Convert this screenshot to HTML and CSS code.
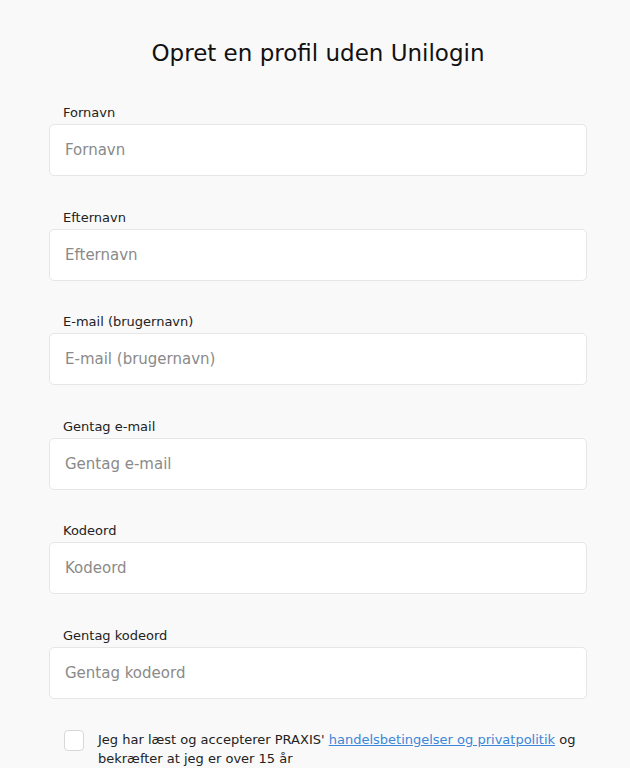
FILE: index.html
```html
<!DOCTYPE html>
<html lang="da">
  <head>
    <meta charset="UTF-8" />
    <meta name="viewport" content="width=device-width, initial-scale=1.0" />
    <title>Opret en profil uden Unilogin</title>
    <link rel="stylesheet" href="styles.css">
  </head>
  <body>
    <div class="signup">
      <h1 class="signup-title">Opret en profil uden Unilogin</h1>
      <form class="signup-form">
        <div class="field">
          <label for="firstname">Fornavn</label>
          <input id="firstname" type="text" placeholder="Fornavn" />
        </div>
        <div class="field">
          <label for="lastname">Efternavn</label>
          <input id="lastname" type="text" placeholder="Efternavn" />
        </div>
        <div class="field">
          <label for="email">E-mail (brugernavn)</label>
          <input id="email" type="email" placeholder="E-mail (brugernavn)" />
        </div>
        <div class="field">
          <label for="email2">Gentag e-mail</label>
          <input id="email2" type="email" placeholder="Gentag e-mail" />
        </div>
        <div class="field">
          <label for="password">Kodeord</label>
          <input id="password" type="password" placeholder="Kodeord" />
        </div>
        <div class="field">
          <label for="password2">Gentag kodeord</label>
          <input id="password2" type="password" placeholder="Gentag kodeord" />
        </div>
        <label class="terms">
          <input type="checkbox" />
          <span class="terms-box"></span>
          <span class="terms-text">Jeg har læst og accepterer PRAXIS' <a href="#">handelsbetingelser og privatpolitik</a> og bekræfter at jeg er over 15 år</span>
        </label>
      </form>
    </div>
  </body>
</html>
```

FILE: styles.css
```css
body {
  margin: 0;
  padding: 0;
  background: #f9f9f9;
  font-family: "DejaVu Sans", sans-serif;
  color: #222;
}
.signup {
  width: 538px;
  margin: 0 auto 0 49px;
  padding-top: 39px;
}
.signup-title {
  margin: 0 0 38px;
  text-align: center;
  font-size: 23px;
  line-height: 28px;
  font-weight: normal;
  color: #111;
}
.signup-form {
  display: flex;
  flex-direction: column;
  gap: 33.6px;
}
.field {
  display: flex;
  flex-direction: column;
  gap: 3px;
}
.field label {
  padding-left: 14px;
  font-size: 13px;
  line-height: 16px;
  color: #222;
}
.field input {
  box-sizing: border-box;
  height: 52px;
  padding: 0 15px;
  border: 1px solid #e6e6e6;
  border-radius: 5px;
  background: #fff;
  font-family: inherit;
  font-size: 15px;
  color: #222;
  outline: none;
}
.field input::placeholder {
  color: #8a8a8a;
}
.terms {
  display: flex;
  align-items: flex-start;
  gap: 14px;
  padding-left: 15px;
  margin-top: -3px;
  font-size: 13px;
  line-height: 19px;
}
.terms input {
  display: none;
}
.terms-box {
  flex: none;
  box-sizing: border-box;
  width: 20px;
  height: 21px;
  border: 1px solid #d8d8d8;
  border-radius: 4px;
  background: #fff;
}
.terms-text {
  color: #222;
}
.terms a {
  color: #3b86d8;
}
```
